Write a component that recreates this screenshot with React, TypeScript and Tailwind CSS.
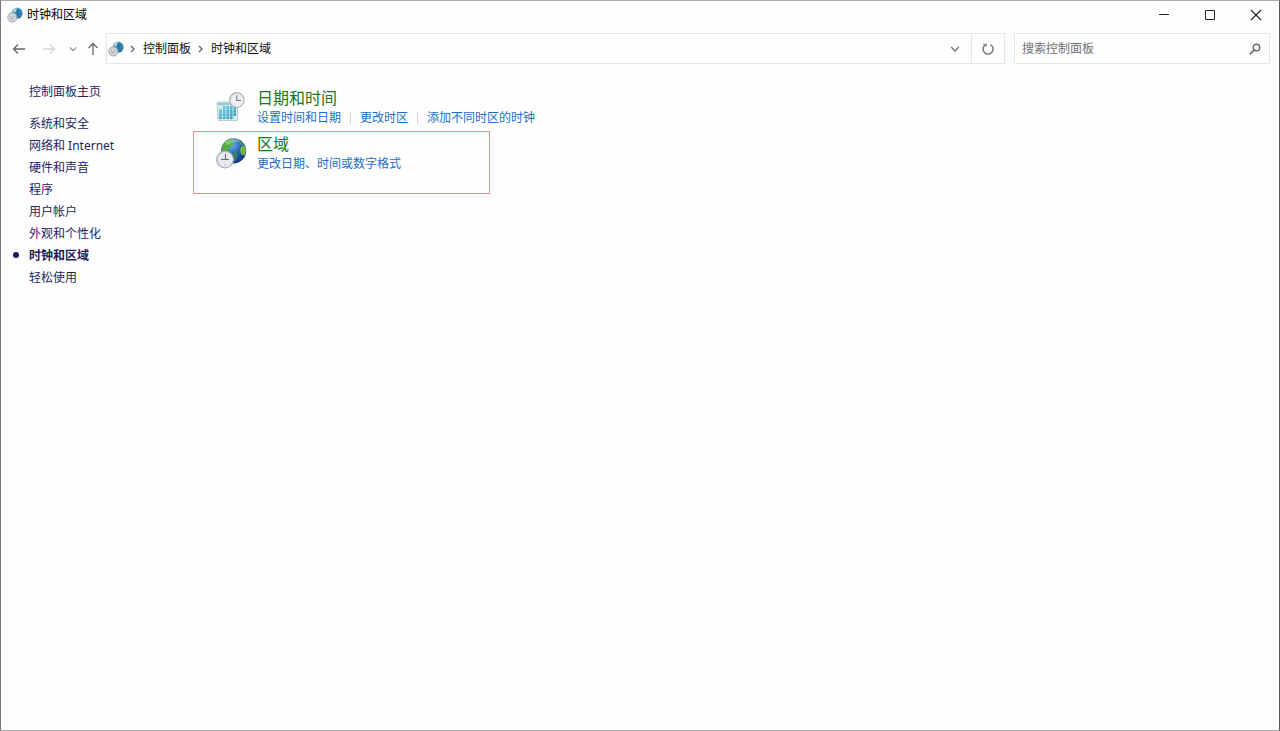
interface IconProps {
  className?: string;
}

interface TaskLink {
  label: string;
  href: string;
}

const sidebarItems = [
  "系统和安全",
  "网络和 Internet",
  "硬件和声音",
  "程序",
  "用户帐户",
  "外观和个性化",
  "时钟和区域",
  "轻松使用",
];

const activeItem = "时钟和区域";

const dateLinks: TaskLink[] = [
  { label: "设置时间和日期", href: "#set-date" },
  { label: "更改时区", href: "#time-zone" },
  { label: "添加不同时区的时钟", href: "#add-clocks" },
];

const regionLinks: TaskLink[] = [
  { label: "更改日期、时间或数字格式", href: "#formats" },
];

const SmallGlobe = ({ className }: IconProps) => (
  <svg viewBox="0 0 16 16" className={className} aria-hidden="true">
    <defs>
      <linearGradient id="smallGlobe" x1="0" y1="0" x2="1" y2="1">
        <stop offset="0" stopColor="#9bd0e0" />
        <stop offset="0.5" stopColor="#3d93b8" />
        <stop offset="1" stopColor="#2a6c9c" />
      </linearGradient>
    </defs>
    <circle cx="10" cy="6.2" r="5.6" fill="url(#smallGlobe)" />
    <path d="M10.5 1.2 13 3l-1 3 1.6 1.4-1.2 3L10 8.5 9 5Z" fill="#2777a6" />
    <path d="M5.5 4 8 1.6l1.8.4L8 5Z" fill="#b4d9df" />
    <circle cx="5.3" cy="10.4" r="4.6" fill="#d3d6d8" stroke="#999fa3" strokeWidth="0.9" />
    <path d="M2.8 9.8h1.4M6.2 9.8h1.5M3.6 11.8h3.2" stroke="#8b9094" strokeWidth="0.8" fill="none" />
  </svg>
);

const CalendarClock = ({ className }: IconProps) => (
  <svg viewBox="0 0 32 32" className={className} aria-hidden="true">
    <defs>
      <linearGradient id="calendar" x1="0" y1="0" x2="1" y2="1">
        <stop offset="0" stopColor="#7fd0e2" />
        <stop offset="1" stopColor="#2a97ba" />
      </linearGradient>
      <linearGradient id="calendarClock" x1="0" y1="0" x2="1" y2="1">
        <stop offset="0" stopColor="#d6d9dc" />
        <stop offset="1" stopColor="#f8f8f8" />
      </linearGradient>
    </defs>
    <path d="M1 10h20.5v18.5H2Z" fill="#dcebef" stroke="#a9c2ca" strokeWidth="0.8" />
    <path d="M2 11h18.6v2.2H2Z" fill="#8fc6d5" />
    <path d="M6 14h14v10h-2.500v3H3V17h3Z" fill="url(#calendar)" />
    <path d="M6.500 14v14M10 14v14M13.500 14v14M17 14v14" stroke="#d9f1f6" strokeWidth="0.8" />
    <path d="M3 17.500h17M3 21h17M3 24.500h17" stroke="#d9f1f6" strokeWidth="0.25" />
    <circle cx="20.8" cy="8" r="7.3" fill="url(#calendarClock)" stroke="#b0b4b8" strokeWidth="1.2" />
    <circle cx="20.8" cy="8" r="5.6" fill="#eceeef" />
    <path d="M20.8 3.500v5H25" fill="none" stroke="#73777d" strokeWidth="1.1" />
  </svg>
);

const GlobeClock = ({ className }: IconProps) => (
  <svg viewBox="0 0 32 32" className={className} aria-hidden="true">
    <defs>
      <radialGradient id="globe" cx="0.4" cy="0.25" r="0.8">
        <stop offset="0" stopColor="#78b7ee" />
        <stop offset="0.5" stopColor="#2661b8" />
        <stop offset="1" stopColor="#123478" />
      </radialGradient>
      <linearGradient id="globeClock" x1="0" y1="0" x2="1" y2="1">
        <stop offset="0" stopColor="#ccd2d8" />
        <stop offset="1" stopColor="#f5f6f8" />
      </linearGradient>
    </defs>
    <circle cx="17.6" cy="12.8" r="12.6" fill="url(#globe)" />
    <path
      d="M6 9C7.5 4 11 1 15.5.4L19 2l-2.5 2L18 6l-3.5 2.3-1 3.4L11 12l-2 3H5.5Z"
      fill="#51ad3d"
    />
    <path d="M20 1l4 1.8 3.5 4L26 8l-2.5-3Z" fill="#4d9d48" />
    <path d="M25 9l3.5-1.5 1.5 5-1.5 5-3-1L24 12.5Z" fill="#75b83d" />
    <path d="M16.5 13l4 1 1.5 3-2 5-2 1.5Z" fill="#347f67" />
    <path d="M9 4c4-3 11-4 15-.5-4-.5-9 .5-13 4Z" fill="#d7efff" opacity="0.35" />
    <circle cx="9" cy="21.5" r="8.4" fill="url(#globeClock)" stroke="#a8afb8" strokeWidth="1.2" />
    <circle cx="9" cy="21.5" r="6.5" fill="#e6eaee" />
    <path d="M9.5 16v6M5 21.5h8" fill="none" stroke="#646b75" strokeWidth="1.1" />
    <path d="M9 26.5v1.2" stroke="#8b929b" strokeWidth="0.8" />
  </svg>
);

const Chevron = ({ className }: IconProps) => (
  <svg viewBox="0 0 10 10" className={className} fill="none" stroke="currentColor" aria-hidden="true">
    <path d="M3 2 6 5 3 8" strokeWidth="1.3" />
  </svg>
);

const ChevronDown = ({ className }: IconProps) => (
  <svg viewBox="0 0 10 10" className={className} fill="none" stroke="currentColor" aria-hidden="true">
    <path d="M1.2 3 5 7l3.8-4" strokeWidth="1.5" />
  </svg>
);

const Arrow = ({ className }: IconProps) => (
  <svg viewBox="0 0 14 14" className={className} fill="none" stroke="currentColor" aria-hidden="true">
    <path d="M13 7H1.5M6 2.5 1.5 7 6 11.5" strokeWidth="1.3" />
  </svg>
);

const TitleBar = () => (
  <header className="flex h-8 items-start justify-between">
    <div className="flex h-7 items-center gap-1 pl-[6px]">
      <SmallGlobe className="size-4" />
      <h1 className="text-black">时钟和区域</h1>
    </div>
    <div className="flex text-[#222]">
      <button aria-label="最小化" className="flex h-7 w-[46px] items-center justify-center">
        <svg viewBox="0 0 12 12" className="size-3" stroke="currentColor" aria-hidden="true">
          <path d="M1 5.5h10" />
        </svg>
      </button>
      <button aria-label="最大化" className="flex h-7 w-[46px] items-center justify-center">
        <svg viewBox="0 0 12 12" className="size-3" fill="none" stroke="currentColor" aria-hidden="true">
          <path d="M1.5 1.5h9v9h-9Z" />
        </svg>
      </button>
      <button aria-label="关闭" className="flex h-7 w-[46px] items-center justify-center">
        <svg viewBox="0 0 12 12" className="size-3" stroke="currentColor" aria-hidden="true">
          <path d="m1 1 10 10M11 1 1 11" strokeWidth="1.1" />
        </svg>
      </button>
    </div>
  </header>
);

const Toolbar = () => (
  <div className="flex items-center pr-[9px]">
    <nav aria-label="导航" className="flex w-[105px] shrink-0 items-center pl-2">
      <button aria-label="后退" className="flex h-6 w-5 items-center justify-center text-[#666]">
        <Arrow className="size-[14px]" />
      </button>
      <button aria-label="前进" disabled className="ml-[10px] flex h-6 w-5 items-center justify-center text-[#d6d6d6]">
        <Arrow className="size-[14px] rotate-180" />
      </button>
      <button aria-label="最近浏览的位置" className="ml-1 flex h-6 w-5 items-center justify-center text-[#888]">
        <ChevronDown className="size-2" />
      </button>
      <button aria-label="上移" className="flex h-6 w-5 items-center justify-center text-[#666]">
        <Arrow className="size-[14px] rotate-90" />
      </button>
    </nav>

    <div className="flex h-[31px] min-w-0 flex-1 items-center border border-[#e6e6e6]">
      <SmallGlobe className="ml-px size-4 shrink-0" />
      <ol className="flex flex-1 items-center whitespace-nowrap text-[#111]">
        <li className="flex items-center">
          <Chevron className="ml-1 size-[10px] text-[#666]" />
          <a href="#control-panel" className="px-[5px]">控制面板</a>
        </li>
        <li className="flex items-center">
          <Chevron className="size-[10px] text-[#666]" />
          <a href="#clock-region" className="px-[5px]">时钟和区域</a>
        </li>
      </ol>
      <button aria-label="以前的位置" className="flex h-full w-8 items-center justify-center text-[#777]">
        <ChevronDown className="size-[10px]" />
      </button>
      <button
        aria-label="刷新"
        className="flex h-full w-[33px] items-center justify-center border-l border-[#e6e6e6] text-[#777]"
      >
        <svg viewBox="0 0 14 14" className="size-[14px]" fill="none" stroke="currentColor" aria-hidden="true">
          <path d="M9.2 2.6A5 5 0 1 1 4 3.2" strokeWidth="1.5" />
          <path d="M2.2 2.2h3v2.6" strokeWidth="1.1" />
        </svg>
      </button>
    </div>

    <form
      role="search"
      onSubmit={(e) => e.preventDefault()}
      className="ml-[9px] flex h-[31px] w-64 shrink-0 items-center border border-[#e6e6e6] pr-2 pl-[7px]"
    >
      <input
        type="text"
        aria-label="搜索控制面板"
        placeholder="搜索控制面板"
        className="min-w-0 flex-1 outline-none placeholder:text-[#707070]"
      />
      <button aria-label="搜索" className="text-[#666]">
        <svg viewBox="0 0 12 12" className="size-3" fill="none" stroke="currentColor" aria-hidden="true">
          <circle cx="7.5" cy="4.5" r="3.3" strokeWidth="1.4" />
          <path d="M5.2 6.9.8 11.3" strokeWidth="1.6" />
        </svg>
      </button>
    </form>
  </div>
);

const Sidebar = () => (
  <nav aria-label="控制面板类别" className="w-48 shrink-0 pt-px pl-7 leading-[22px] text-[#252563]">
    <a href="#home">控制面板主页</a>
    <ul className="mt-[10px]">
      {sidebarItems.map((item) =>
        item === activeItem ? (
          <li key={item} className="relative font-bold text-[#1c1c58]">
            <span className="absolute top-[7px] -left-4 size-[6px] rounded-full bg-[#1c1c58]" />
            <a href="#clock-region" aria-current="page">{item}</a>
          </li>
        ) : (
          <li key={item}>
            <a href="#category">{item}</a>
          </li>
        )
      )}
    </ul>
  </nav>
);

interface CategoryProps {
  title: string;
  icon: React.ReactNode;
  links: TaskLink[];
}

const Category = ({ title, icon, links }: CategoryProps) => (
  <div className="flex gap-[9px]">
    <div className="shrink-0 pt-1">{icon}</div>
    <div>
      <h2 className="text-base leading-5 text-[#127a1f]">
        <a href="#category">{title}</a>
      </h2>
      <ul className="flex items-center leading-5 text-[#1a6fc9]">
        {links.map((link, i) => (
          <li key={link.href} className="flex items-center">
            {i > 0 && <span className="mx-[9px] h-3 w-px bg-[#d5d5d5]" />}
            <a href={link.href}>{link.label}</a>
          </li>
        ))}
      </ul>
    </div>
  </div>
);

const App = () => {
  return (
    <div className="flex min-h-screen flex-col border border-t-[#aaa] border-r-[#555] border-b-[#aaa] border-l-[#777] bg-[#fefefe] font-['Noto_Sans','Noto_Sans_CJK_SC',sans-serif] text-xs">
      <TitleBar />
      <Toolbar />
      <div className="flex flex-1 pt-4">
        <Sidebar />
        <main className="min-w-0 flex-1 pt-2">
          <section className="pl-[23px]">
            <Category
              title="日期和时间"
              icon={<CalendarClock className="size-8" />}
              links={dateLinks}
            />
          </section>
          <section className="mt-[3px] w-[297px] border border-[#f28b8b] pt-[2px] pb-[19px] pl-[22px]">
            <Category
              title="区域"
              icon={<GlobeClock className="size-8" />}
              links={regionLinks}
            />
          </section>
        </main>
      </div>
    </div>
  );
};

export default App;
